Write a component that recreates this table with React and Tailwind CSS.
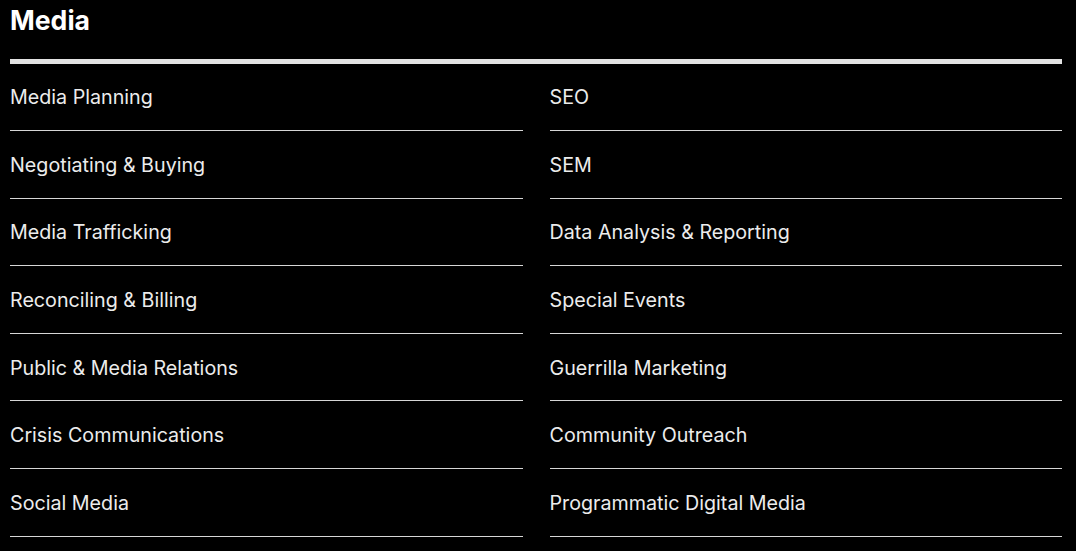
export default function App() {
  const left = [
    'Media Planning',
    'Negotiating & Buying',
    'Media Trafficking',
    'Reconciling & Billing',
    'Public & Media Relations',
    'Crisis Communications',
    'Social Media',
  ]
  const right = [
    'SEO',
    'SEM',
    'Data Analysis & Reporting',
    'Special Events',
    'Guerrilla Marketing',
    'Community Outreach',
    'Programmatic Digital Media',
  ]

  return (
    <div className="min-h-[551px] bg-black px-[10px] pr-[14px] font-['Inter',sans-serif] text-[#ececec]">
      {/* Heading */}
      <h2 className="pt-[3px] text-[26.6px] font-bold leading-[34px] text-white">Media</h2>
      <div className="mt-[22px] h-[4.5px] bg-[#e2e2e2]" />

      {/* Service lists */}
      <div className="grid grid-cols-2 gap-x-[27px]">
        {[left, right].map((col, i) => (
          <ul key={i}>
            {col.map((item) => (
              <li
                key={item}
                className="flex h-[67.6px] items-center border-b border-[#d6d6d6] pt-[1px] text-[19.7px] leading-[28px]"
              >
                {item}
              </li>
            ))}
          </ul>
        ))}
      </div>
    </div>
  )
}
